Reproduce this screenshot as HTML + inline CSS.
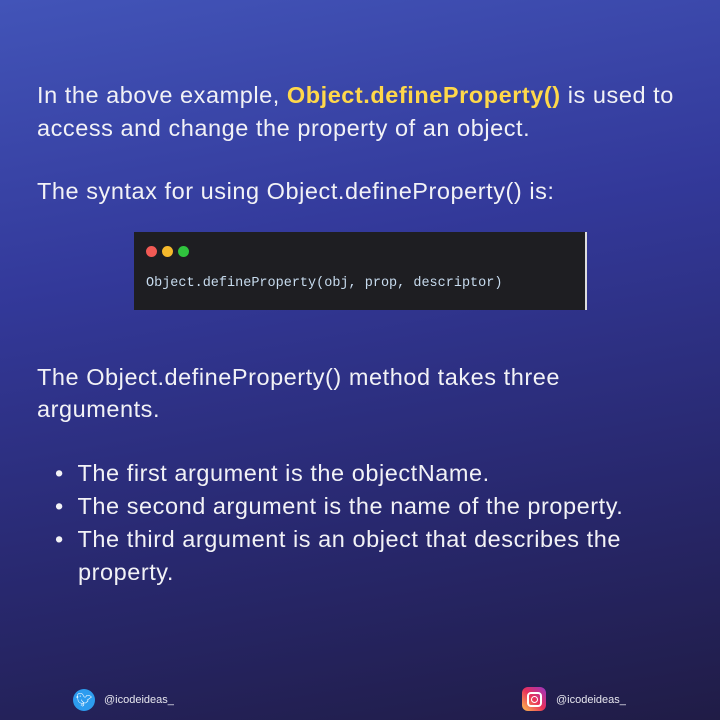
<!DOCTYPE html>
<html><head><style>
body{margin:0;width:720px;height:720px;overflow:hidden;background:linear-gradient(170deg,#4254b8 0%,#33399a 35%,#28286e 70%,#201c46 100%);font-family:"Liberation Sans",sans-serif;color:#f2f2f6;position:relative}
.t{position:absolute;left:37px;font-size:23.5px;letter-spacing:0.55px;line-height:33px;white-space:nowrap}
b{color:#ffd84a}
.code{position:absolute;left:134px;top:232px;width:451px;height:78px;background:#1e1e22;border-right:2px solid #ddd}
.d{position:absolute;top:14px;width:11px;height:11px;border-radius:50%}
.c{position:absolute;left:12px;top:44px;font-family:"Liberation Mono",monospace;font-size:13.5px;color:#c8dcef}
.f{position:absolute;top:688px;font-size:11px;color:#e6e6ee}
</style></head><body>
<div class="t" style="top:79px">In the above example, <b>Object.defineProperty()</b> is used to</div>
<div class="t" style="top:112px">access and change the property of an object.</div>
<div class="t" style="top:175px">The syntax for using Object.defineProperty() is:</div>
<div class="code">
<div class="d" style="left:12px;background:#f25a55"></div>
<div class="d" style="left:28px;background:#f5b92c"></div>
<div class="d" style="left:44px;background:#30c43e"></div>
<div class="c">Object.defineProperty(obj, prop, descriptor)</div>
</div>
<div class="t" style="top:361px">The Object.defineProperty() method takes three</div>
<div class="t" style="top:393px">arguments.</div>
<div class="t" style="top:457px;left:55px">•&nbsp; The first argument is the objectName.</div>
<div class="t" style="top:490px;left:55px">•&nbsp; The second argument is the name of the property.</div>
<div class="t" style="top:523px;left:55px">•&nbsp; The third argument is an object that describes the</div>
<div class="t" style="top:556px;left:78px">property.</div>
<div style="position:absolute;left:73px;top:689px;width:22px;height:22px;border-radius:50%;background:#2d9cef;color:#fff;font-size:13px;text-align:center;line-height:22px">🐦︎</div>
<div class="f" style="left:104px;top:694px">@icodeideas_</div>
<div style="position:absolute;left:522px;top:687px;width:24px;height:24px;border-radius:6px;background:linear-gradient(45deg,#fdc14f,#e8305a,#9a35c4)"><div style="position:absolute;left:5px;top:5px;width:11px;height:11px;border:2px solid #fff;border-radius:4px"></div><div style="position:absolute;left:8.5px;top:8.5px;width:5px;height:5px;border:1.5px solid #fff;border-radius:50%"></div></div>
<div class="f" style="left:556px;top:694px">@icodeideas_</div>
</body></html>
